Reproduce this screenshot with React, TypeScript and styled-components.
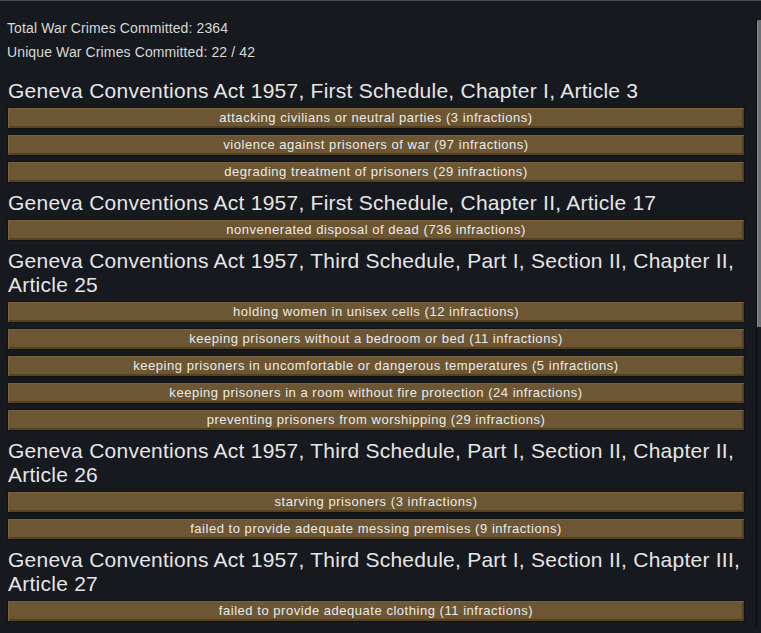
import styled, { createGlobalStyle } from "styled-components";

interface Crime {
  name: string;
  count: number;
}

interface Law {
  title: string;
  crimes: Crime[];
}

const laws: Law[] = [
  {
    title: "Geneva Conventions Act 1957, First Schedule, Chapter I, Article 3",
    crimes: [
      { name: "attacking civilians or neutral parties", count: 3 },
      { name: "violence against prisoners of war", count: 97 },
      { name: "degrading treatment of prisoners", count: 29 },
    ],
  },
  {
    title: "Geneva Conventions Act 1957, First Schedule, Chapter II, Article 17",
    crimes: [{ name: "nonvenerated disposal of dead", count: 736 }],
  },
  {
    title:
      "Geneva Conventions Act 1957, Third Schedule, Part I, Section II, Chapter II, Article 25",
    crimes: [
      { name: "holding women in unisex cells", count: 12 },
      { name: "keeping prisoners without a bedroom or bed", count: 11 },
      { name: "keeping prisoners in uncomfortable or dangerous temperatures", count: 5 },
      { name: "keeping prisoners in a room without fire protection", count: 24 },
      { name: "preventing prisoners from worshipping", count: 29 },
    ],
  },
  {
    title:
      "Geneva Conventions Act 1957, Third Schedule, Part I, Section II, Chapter II, Article 26",
    crimes: [
      { name: "starving prisoners", count: 3 },
      { name: "failed to provide adequate messing premises", count: 9 },
    ],
  },
  {
    title:
      "Geneva Conventions Act 1957, Third Schedule, Part I, Section II, Chapter III, Article 27",
    crimes: [{ name: "failed to provide adequate clothing", count: 11 }],
  },
];

const GlobalStyle = createGlobalStyle`
  html, body {
    margin: 0;
    padding: 0;
    background: #16191e;
    overflow: hidden;
  }
  body {
    font-family: "Liberation Sans", Arial, sans-serif;
  }
`;

const Panel = styled.div`
  min-height: 633px;
  box-sizing: border-box;
  border-top: 1px solid #454b57;
  padding: 15px 16px 0 7px;
  background: #16191e;
`;

const StatLine = styled.div`
  font-size: 14px;
  letter-spacing: 0.12px;
  line-height: 24px;
  color: #d9d9d9;
`;

const Stats = styled.div`
  margin-bottom: 15px;
`;

const Section = styled.section`
  display: flex;
  flex-direction: column;
  & + & {
    margin-top: 3px;
  }
`;

const Heading = styled.h2`
  margin: 0 0 4px 0;
  font-weight: normal;
  font-size: 21px;
  letter-spacing: 0.25px;
  line-height: 24px;
  color: #e6e6e6;
  padding-left: 1px;
`;

const CrimeBar = styled.div`
  height: 22px;
  box-sizing: border-box;
  margin-bottom: 5px;
  border: 1px solid #111214;
  background: #6c5633;
  box-shadow: inset 1px 1px 0 #7a6240, inset -2px -2px 0 #54421f;
  display: flex;
  align-items: center;
  justify-content: center;
  padding-bottom: 1px;
  font-size: 13px;
  letter-spacing: 0.53px;
  color: #ebebeb;
  white-space: nowrap;
`;

const ScrollTrack = styled.div`
  position: fixed;
  top: 20px;
  right: 0;
  bottom: 6px;
  width: 4px;
  border-left: 1px solid #0b0c0f;
  border-radius: 0 0 0 3px;
`;

const ScrollThumb = styled.div`
  height: 307px;
  background: #6f7072;
  border-left: 1px solid #8a8b8d;
  border-radius: 2px 0 0 0;
`;

export default function App() {
  return (
    <>
      <GlobalStyle />
      <Panel>
        <Stats>
          <StatLine>Total War Crimes Committed: 2364</StatLine>
          <StatLine>Unique War Crimes Committed: 22 / 42</StatLine>
        </Stats>
        {laws.map((law) => (
          <Section key={law.title}>
            <Heading>{law.title}</Heading>
            {law.crimes.map((c) => (
              <CrimeBar key={c.name}>
                {c.name} ({c.count} infractions)
              </CrimeBar>
            ))}
          </Section>
        ))}
      </Panel>
      <ScrollTrack>
        <ScrollThumb />
      </ScrollTrack>
    </>
  );
}
